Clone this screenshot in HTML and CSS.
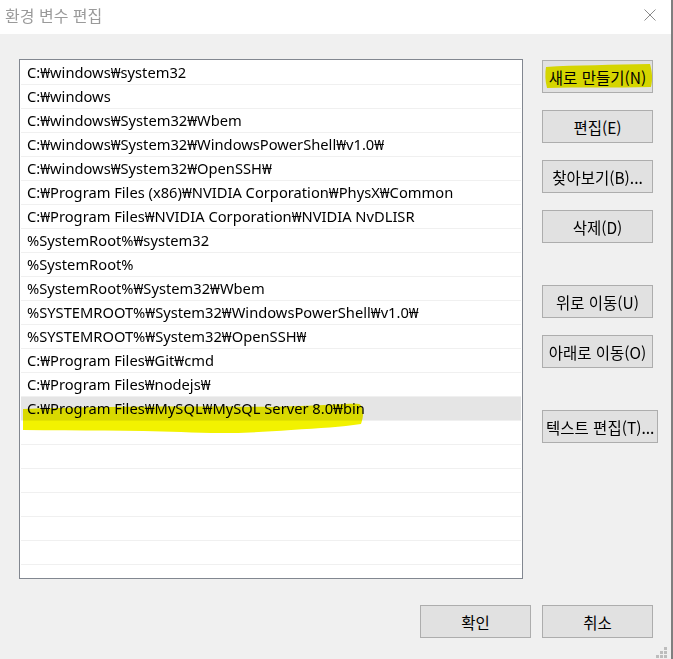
FILE: index.html
```html
<!DOCTYPE html>
<html lang="ko">
<head>
<meta charset="utf-8">
<title>환경 변수 편집</title>
<link rel="stylesheet" href="styles.css">
</head>
<body>
<div class="window">
  <div class="titlebar">
    <span class="title">환경 변수 편집</span>
    <svg class="close" width="12" height="12" viewBox="0 0 12 12"><path d="M0.5 0.5 L11.5 11.5 M11.5 0.5 L0.5 11.5" stroke="#8a8a8a" stroke-width="1" fill="none"/></svg>
  </div>
  <div class="content">
    <div class="main">
      <div class="list">
        <div class="row">C:₩windows₩system32</div>
        <div class="row">C:₩windows</div>
        <div class="row">C:₩windows₩System32₩Wbem</div>
        <div class="row">C:₩windows₩System32₩WindowsPowerShell₩v1.0₩</div>
        <div class="row">C:₩windows₩System32₩OpenSSH₩</div>
        <div class="row">C:₩Program Files (x86)₩NVIDIA Corporation₩PhysX₩Common</div>
        <div class="row">C:₩Program Files₩NVIDIA Corporation₩NVIDIA NvDLISR</div>
        <div class="row">%SystemRoot%₩system32</div>
        <div class="row">%SystemRoot%</div>
        <div class="row">%SystemRoot%₩System32₩Wbem</div>
        <div class="row">%SYSTEMROOT%₩System32₩WindowsPowerShell₩v1.0₩</div>
        <div class="row">%SYSTEMROOT%₩System32₩OpenSSH₩</div>
        <div class="row">C:₩Program Files₩Git₩cmd</div>
        <div class="row">C:₩Program Files₩nodejs₩</div>
        <div class="row selected">C:₩Program Files₩MySQL₩MySQL Server 8.0₩bin
          <svg class="marker marker-row" width="345" height="34" viewBox="0 0 345 34"><path d="M2 9 C60 7 150 6 250 7 C300 6 330 3 338 4 C343 6 343 16 340 24 C320 27 300 28 270 30 C230 33 200 34 160 32 C110 30 60 31 2 30 Z" fill="#f2f200"/></svg>
        </div>
        <div class="row"></div>
        <div class="row"></div>
        <div class="row"></div>
        <div class="row"></div>
        <div class="row"></div>
        <div class="row"></div>
        <div class="row"></div>
      </div>
      <div class="side">
        <button class="btn">새로 만들기(N)
          <svg class="marker marker-btn" width="110" height="26" viewBox="0 0 110 26"><path d="M2 4 C30 2 70 2 106 1 C108 8 109 16 107 24 C70 25 35 24 3 25 C1 18 1 10 2 4 Z" fill="#f2f200"/></svg>
        </button>
        <button class="btn">편집(E)</button>
        <button class="btn">찾아보기(B)...</button>
        <button class="btn">삭제(D)</button>
        <button class="btn group">위로 이동(U)</button>
        <button class="btn">아래로 이동(O)</button>
        <button class="btn group">텍스트 편집(T)...</button>
      </div>
    </div>
    <div class="footer">
      <button class="btn">확인</button>
      <button class="btn">취소</button>
    </div>
  </div>
  <svg class="grip" width="12" height="12" viewBox="0 0 12 12">
    <rect x="8" y="0" width="3" height="3" fill="#bdbdbd"/>
    <rect x="4" y="4" width="3" height="3" fill="#bdbdbd"/>
    <rect x="8" y="4" width="3" height="3" fill="#bdbdbd"/>
    <rect x="0" y="8" width="3" height="3" fill="#bdbdbd"/>
    <rect x="4" y="8" width="3" height="3" fill="#bdbdbd"/>
    <rect x="8" y="8" width="3" height="3" fill="#bdbdbd"/>
  </svg>
</div>
</body>
</html>
```

FILE: styles.css
```css
* { box-sizing: border-box; }
html, body {
  margin: 0;
  padding: 0;
  background: #f0f0f0;
}
body {
  font-family: "Noto Sans", "Noto Sans CJK KR", sans-serif;
  font-size: 15px;
  color: #000;
}
.window {
  position: relative;
  width: 673px;
  height: 659px;
  border-right: 2px solid #7f7f7f;
  background: #f0f0f0;
  overflow: hidden;
  display: flex;
  flex-direction: column;
}
.titlebar {
  height: 34px;
  background: #fff;
  display: flex;
  align-items: center;
  justify-content: space-between;
  padding: 0 15px 4px 5px;
}
.title {
  font-family: "Noto Sans CJK KR", sans-serif;
  font-size: 16px;
  color: #9a9a9a;
}
.close {
  display: block;
  margin-top: 0;
}
.content {
  flex: 1;
  display: flex;
  flex-direction: column;
}
.main {
  display: flex;
  padding: 25px 0 0 19px;
}
.list {
  width: 504px;
  height: 520px;
  border: 1px solid #828790;
  background: #fff;
  padding: 1px 1px 0 1px;
  overflow: hidden;
}
.row {
  position: relative;
  height: 24px;
  line-height: 23px;
  border-bottom: 1px solid #f0f0f0;
  padding-left: 6px;
  white-space: nowrap;
  font-size: 14.7px;
}
.row.selected {
  background: #e5e5e5;
}
.marker {
  position: absolute;
  mix-blend-mode: multiply;
  pointer-events: none;
}
.marker-row {
  left: 0;
  top: 3px;
}
.side {
  display: flex;
  flex-direction: column;
  align-items: flex-start;
  gap: 17px;
  margin-left: 19px;
  padding-top: 1px;
}
.btn {
  position: relative;
  min-width: 111px;
  height: 33px;
  padding: 0 3px;
  border: 1px solid #adadad;
  background: #e1e1e1;
  font-family: "Noto Sans CJK KR", sans-serif;
  font-size: 15.5px;
  color: #000;
  white-space: nowrap;
}
.btn.group {
  margin-top: 25px;
}
.marker-btn {
  left: 1px;
  top: 2px;
}
.footer {
  display: flex;
  justify-content: flex-end;
  gap: 11px;
  padding: 26px 18px 0 0;
}
.grip {
  position: absolute;
  right: 3px;
  bottom: 0;
}
```
